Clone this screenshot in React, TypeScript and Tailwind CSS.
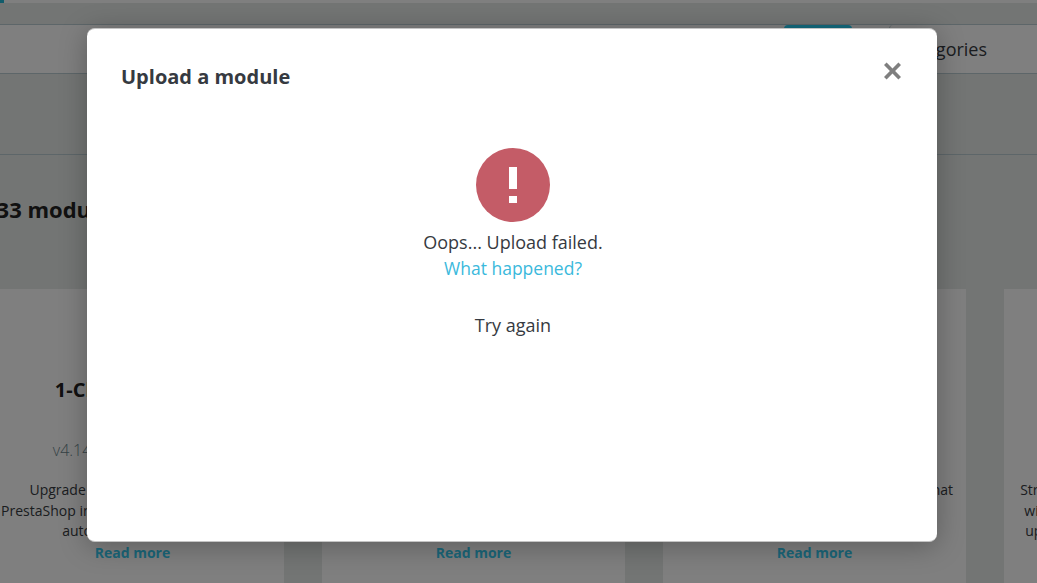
import React from "react";

const font = { fontFamily: '"Open Sans", sans-serif' };

interface ModuleCard {
  title: string;
  version: string;
  lines: string[];
}

const cards: ModuleCard[] = [
  { title: "1-Click Upgrade", version: "v4.14.2 by PrestaShop", lines: ["Upgrade to the latest version of", "PrestaShop in a few clicks, thanks to this", "automated upgrades."] },
  { title: "", version: "", lines: ["", "", ""] },
  { title: "", version: "", lines: ["Keep your customers informed with a chat", "", ""] },
  { title: "", version: "", lines: ["Stripe payments made simple and easy: a", "with a quick setup that is always kept up", "up to date for you at all times of the day"] },
];

function Card({ card }: { card: ModuleCard }) {
  return (
    <div className="w-[303px] shrink-0 bg-white h-[320px] flex flex-col items-center text-center">
      <div className="h-[114px] pt-[88px] text-[20px] leading-[26px] font-bold text-[#232323]">{card.title}</div>
      <div className="mt-[34px] h-[26px] whitespace-nowrap text-[16px] leading-[26px] text-[#6c868e] font-light">{card.version}</div>
      <div className="mt-[17px] w-[290px] text-[14px] leading-[20.5px] text-[#363a41] whitespace-nowrap">
        {card.lines.map((line, i) => (
          <div key={i} className="h-[20.5px] flex justify-center">{line}</div>
        ))}
      </div>
      <a className="mt-[1px] text-[14px] leading-[20px] font-bold text-[#36cbf0]">Read more</a>
    </div>
  );
}

export default function App() {
  return (
    <div style={font} className="relative h-[583px] w-[1037px] overflow-hidden bg-[#e7eae8]">
      {/* page behind the dialog */}
      <div className="h-[3px] bg-white">
        <div className="h-[3px] w-[4px] bg-[#25b9d7]" />
      </div>
      <div className="h-[21px]" />
      <div className="flex h-[50px] items-start border-y border-[#bbcdd2] bg-white pl-[784px]">
        <div className="h-[20px] w-[68px] rounded-t bg-[#28d6fc]" />
        <div className="ml-[37px] flex h-[48px] items-center rounded-t border-l border-[#bbcdd2] pl-[8px] pt-[1px] text-[18px] text-[#363a41]">
          Categories
        </div>
      </div>
      <div className="h-[81px] border-b border-[#bbcdd2]" />
      <div className="mt-[39px] -ml-[16px] h-[95px] whitespace-nowrap text-[22px] leading-[30px] font-bold text-[#232323]">233 modules</div>
      <div className="-ml-[19px] flex gap-[38px]">
        {cards.map((card, i) => (
          <Card key={i} card={card} />
        ))}
      </div>

      {/* backdrop */}
      <div className="absolute inset-0 bg-black/50" />

      {/* dialog */}
      <div className="absolute left-[87px] top-[28px] flex h-[514px] w-[850px] flex-col rounded-lg border-y border-[#c4c4c4] bg-white px-[34px] shadow-[0_4px_28px_rgba(0,0,0,0.28)]">
        <div className="flex items-start justify-between pt-[34px]">
          <h2 className="text-[20px] leading-[28px] font-bold text-[#363a41]">Upload a module</h2>
          <svg width="19" height="19" viewBox="0 0 19 19" className="mt-[-1px] mr-[1px]">
            <path d="M1 3.6 3.6 1 9.5 6.9 15.4 1 18 3.6 12.1 9.5 18 15.4 15.4 18 9.5 12.1 3.6 18 1 15.4 6.9 9.5Z" fill="#7f7f7f" transform="translate(0 -0.5)" />
          </svg>
        </div>
        <div className="mt-[57px] flex flex-col items-center pl-[2px]">
          <div className="flex h-[74px] w-[74px] items-center justify-center rounded-full bg-[#c45c67]">
            <svg width="8" height="36" viewBox="0 0 8 36">
              <rect x="0" y="0" width="8" height="22" fill="#fff" />
              <rect x="0" y="29" width="8" height="7" fill="#fff" />
            </svg>
          </div>
          <div className="mt-[8px] text-[18px] leading-[24px] font-medium text-[#363a41]">Oops... Upload failed.</div>
          <a className="mt-[2px] text-[17.5px] leading-[24px] text-[#3bb9dc]">What happened?</a>
          <button className="mt-[33px] text-[18px] leading-[24px] font-medium text-[#363a41]">Try again</button>
        </div>
      </div>
    </div>
  );
}
